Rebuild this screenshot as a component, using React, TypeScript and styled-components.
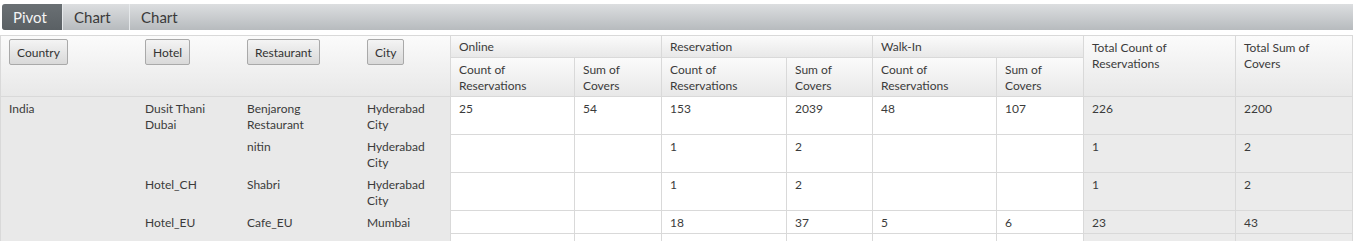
import React from "react";
import styled, { createGlobalStyle, css } from "styled-components";

const GlobalStyle = createGlobalStyle`
  body {
    margin: 0;
    background: #fff;
    font-family: Lato, "Open Sans", sans-serif;
    color: #3b3b3b;
  }
`;

const COLS = [137, 102, 120, 92, 124, 87, 125, 86, 124, 87, 152, 117];
const ROWS = [22, 39, 38, 38, 38, 23, 38];
const LINE = "#d9d9d9";

const TabBar = styled.div`
  display: flex;
  height: 26px;
  margin: 4px 0 5px 2px;
  border-radius: 3px 0 0 3px;
  overflow: hidden;
  background: linear-gradient(#dcdee0, #b7bbbe);
`;

const Tab = styled.div<{ $active?: boolean; $width?: number }>`
  display: flex;
  align-items: center;
  width: ${({ $width }) => ($width ? `${$width}px` : "auto")};
  padding: 0 11px;
  box-sizing: border-box;
  font-size: 15px;
  color: #3a3a3a;
  border-right: 1px solid #e6e9eb;
  ${({ $active }) =>
    $active &&
    css`
      color: #f4f4f4;
      background: linear-gradient(#6a7074, #5a6064);
    `}
  &:last-child {
    border-right: none;
  }
`;

const Grid = styled.div`
  display: grid;
  grid-template-columns: ${COLS.map((c) => `${c}px`).join(" ")};
  grid-template-rows: ${ROWS.map((r) => `${r}px`).join(" ")};
  border-top: 1px solid ${LINE};
  font-size: 12px;
  line-height: 16px;
`;

const headBg = css`
  background: linear-gradient(#fbfbfb, #e8e8e8);
`;

const AxisHead = styled.div<{ $first?: boolean; $last?: boolean }>`
  grid-row: span 2;
  ${headBg};
  padding: 3px 8px;
  border-bottom: 1px solid ${LINE};
  border-left: ${({ $first }) => ($first ? `1px solid ${LINE}` : "none")};
  border-right: ${({ $last }) => ($last ? `1px solid ${LINE}` : "none")};
`;

const FieldButton = styled.button`
  height: 26px;
  padding: 0 7px;
  font-family: inherit;
  font-size: 12px;
  color: #333;
  border: 1px solid #a9a9a9;
  border-radius: 2px;
  background: linear-gradient(#f4f4f4, #d9d9d9);
`;

const GroupHead = styled.div`
  grid-column: span 2;
  ${headBg};
  padding: 3px 8px;
  border-right: 1px solid ${LINE};
  border-bottom: 1px solid ${LINE};
`;

const MeasureHead = styled.div<{ $span?: number }>`
  grid-row: span ${({ $span }) => $span ?? 1};
  ${headBg};
  padding: 4px 8px;
  border-right: 1px solid ${LINE};
  border-bottom: 1px solid ${LINE};
`;

const AxisCell = styled.div<{ $first?: boolean; $last?: boolean }>`
  background: #e9e9e9;
  padding: 4px 8px 0;
  border-left: ${({ $first }) => ($first ? `1px solid ${LINE}` : "none")};
  border-right: ${({ $last }) => ($last ? `1px solid ${LINE}` : "none")};
`;

const ValueCell = styled.div<{ $total?: boolean }>`
  background: ${({ $total }) => ($total ? "#ebebeb" : "#fff")};
  padding: 4px 8px 0;
  border-right: 1px solid ${LINE};
  border-bottom: 1px solid ${LINE};
`;

const fields = ["Country", "Hotel", "Restaurant", "City"];
const groups = ["Online", "Reservation", "Walk-In"];

const rows = [
  { axis: ["India", "Dusit Thani Dubai", "Benjarong Restaurant", "Hyderabad City"], vals: ["25", "54", "153", "2039", "48", "107", "226", "2200"] },
  { axis: ["", "", "nitin", "Hyderabad City"], vals: ["", "", "1", "2", "", "", "1", "2"] },
  { axis: ["", "Hotel_CH", "Shabri", "Hyderabad City"], vals: ["", "", "1", "2", "", "", "1", "2"] },
  { axis: ["", "Hotel_EU", "Cafe_EU", "Mumbai"], vals: ["", "", "18", "37", "5", "6", "23", "43"] },
  { axis: ["", "", "", ""], vals: ["", "", "", "", "", "", "", ""] },
];

export default function App() {
  return (
    <>
      <GlobalStyle />
      <TabBar>
        <Tab $active $width={61}>Pivot</Tab>
        <Tab $width={67}>Chart</Tab>
        <Tab>Chart</Tab>
      </TabBar>
      <Grid>
        {fields.map((f, i) => (
          <AxisHead key={f} $first={i === 0} $last={i === fields.length - 1}>
            <FieldButton>{f}</FieldButton>
          </AxisHead>
        ))}
        {groups.map((g) => (
          <GroupHead key={g}>{g}</GroupHead>
        ))}
        <MeasureHead $span={2}>Total Count of Reservations</MeasureHead>
        <MeasureHead $span={2}>Total Sum of Covers</MeasureHead>
        {groups.map((g) => (
          <React.Fragment key={g}>
            <MeasureHead>Count of Reservations</MeasureHead>
            <MeasureHead>Sum of Covers</MeasureHead>
          </React.Fragment>
        ))}
        {rows.map((r, ri) => (
          <React.Fragment key={ri}>
            {r.axis.map((a, i) => (
              <AxisCell key={`a${i}`} $first={i === 0} $last={i === 3}>
                {a}
              </AxisCell>
            ))}
            {r.vals.map((v, i) => (
              <ValueCell key={`v${i}`} $total={i >= 6}>
                {v}
              </ValueCell>
            ))}
          </React.Fragment>
        ))}
      </Grid>
    </>
  );
}
